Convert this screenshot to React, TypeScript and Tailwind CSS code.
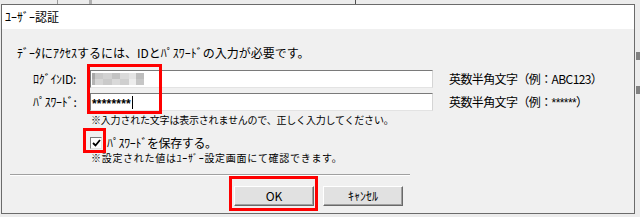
const jp = "font-['Noto_Sans_CJK_JP','Noto_Sans',sans-serif]";

function BlurredId() {
  const rows = [
    ["#a9a9a9", "#c9c9c9", "#d2d2d2", "#c3c3c3", "#dadada", "#e4e4e4", "#bdbdbd"],
    ["#b4b4b4", "#d6d6d6", "#cacaca", "#d9d9d9", "#cfcfcf", "#ededed", "#c6c6c6"],
  ];
  const widths = ["w-[3px]", "w-[8px]", "w-[9px]", "w-[8px]", "w-[9px]", "w-[7px]", "w-[8px]"];
  return (
    <div className="flex flex-col ml-[1px]">
      {rows.map((row, i) => (
        <div key={i} className="flex h-[6px]">
          {row.map((c, j) => (
            <div key={j} className={`${widths[j]} h-full`} style={{ backgroundColor: c }} />
          ))}
        </div>
      ))}
    </div>
  );
}

function Field({ children }: { children?: React.ReactNode }) {
  return (
    <div className="w-[343px] h-[18px] bg-white border border-t-[#7a7a7a] border-l-[#7a7a7a] border-b-[#e3e3e3] border-r-[#d5d5d5] flex items-center">
      {children}
    </div>
  );
}

function Button({ label }: { label: string }) {
  return (
    <div className="w-[80px] h-[20px] bg-[#e1e1e1] border border-t-white border-l-white border-b-[#696969] border-r-[#696969] shadow-[inset_-1px_-1px_0_#a0a0a0] flex items-center justify-center text-[12px] leading-none text-black">
      {label}
    </div>
  );
}

export default function App() {
  return (
    <div className={`relative w-[640px] h-[217px] bg-[#ececec] overflow-hidden pt-[4px] pl-[1px] ${jp}`}>
      {/* bits of the window behind */}
      <div className="absolute left-[57px] top-0 w-[1px] h-[4px] bg-[#9a9a9a]" />
      <div className="absolute left-[89px] top-0 w-[3px] h-[4px] bg-[#b0b0b0]" />
      <div className="absolute left-[355px] top-0 w-[1px] h-[4px] bg-[#505050]" />
      <div className="absolute left-[636px] top-[52px] w-[4px] h-[8px] bg-[#3a3a3a] opacity-60" />
      <div className="absolute left-[636px] top-[86px] w-[4px] h-[8px] bg-[#3a3a3a] opacity-60" />

      <div className="w-[634px] h-[210px] border border-[#6b6b6b] flex flex-col bg-[#f0f0f0]">
        <div className="h-[24px] bg-white flex items-center pl-[3px] text-[12px] text-black">ﾕｰｻﾞｰ認証</div>

        <div className="flex flex-col text-black">
          <div className="mt-[16px] ml-[15px] text-[12px] leading-[16px]">
            ﾃﾞｰﾀにｱｸｾｽするには、IDとﾊﾟｽﾜｰﾄﾞの入力が必要です。
          </div>

          <div className="mt-[9px] flex flex-col gap-[5px]">
            <div className="flex items-center">
              <div className="w-[88px] pl-[31px] text-[12px] leading-none tracking-[-0.3px]">ﾛｸﾞｲﾝID:</div>
              <Field>
                <BlurredId />
              </Field>
              <div className="ml-[16px] text-[12px] leading-none tracking-[-0.6px]">英数半角文字（例：ABC123）</div>
            </div>
            <div className="flex items-center">
              <div className="w-[88px] pl-[31px] text-[12px] leading-none tracking-[-0.3px]">ﾊﾟｽﾜｰﾄﾞ:</div>
              <Field>
                <span className="ml-[1px] font-['Liberation_Sans',sans-serif] font-bold text-[12px] leading-none tracking-[0.2px] mt-[3px]">********</span>
                <span className="ml-[1px] w-[1px] h-[13px] bg-black" />
              </Field>
              <div className="ml-[16px] text-[12px] leading-none tracking-[-0.6px]">
                英数半角文字（例：<span className="font-['Liberation_Sans',sans-serif] text-[12px]">******</span>）
              </div>
            </div>
          </div>

          <div className="mt-[2px] ml-[89px] text-[10px] leading-[14px] tracking-[-0.2px]">
            ※入力された文字は表示されませんので、正しく入力してください。
          </div>

          <div className="mt-[9px] ml-[88px] flex items-center h-[14px]">
            <div className="w-[12px] h-[12px] bg-white border border-t-[#7a7a7a] border-l-[#7a7a7a] border-b-[#e3e3e3] border-r-[#e3e3e3] flex items-center justify-center">
              <svg width="9" height="8" viewBox="0 0 9 8">
                <path d="M1 4 L3.5 6.5 L8 1" fill="none" stroke="#000" strokeWidth="1.8" />
              </svg>
            </div>
            <div className="ml-[5px] text-[12px] leading-[12px] tracking-[-0.4px]">ﾊﾟｽﾜｰﾄﾞを保存する。</div>
          </div>

          <div className="mt-[2px] ml-[89px] text-[10px] leading-[12px] tracking-[0.7px]">
            ※設定された値はﾕｰｻﾞｰ設定画面にて確認できます。
          </div>

          <div className="mt-[10px] ml-[8px] w-[400px] h-[2px] border-t border-t-[#a0a0a0] border-b border-b-white" />

          <div className="mt-[10px] ml-[232px] flex gap-[9px]">
            <Button label="OK" />
            <Button label="ｷｬﾝｾﾙ" />
          </div>
        </div>
      </div>

      {/* red annotation frames */}
      <div className="absolute left-[87px] top-[64px] w-[75px] h-[50px] border-[3px] border-[#ff0000]" />
      <div className="absolute left-[83px] top-[128px] w-[23px] h-[25px] border-[3px] border-[#ff0000]" />
      <div className="absolute left-[229px] top-[176px] w-[89px] h-[35px] border-[3px] border-[#ff0000]" />
    </div>
  );
}
